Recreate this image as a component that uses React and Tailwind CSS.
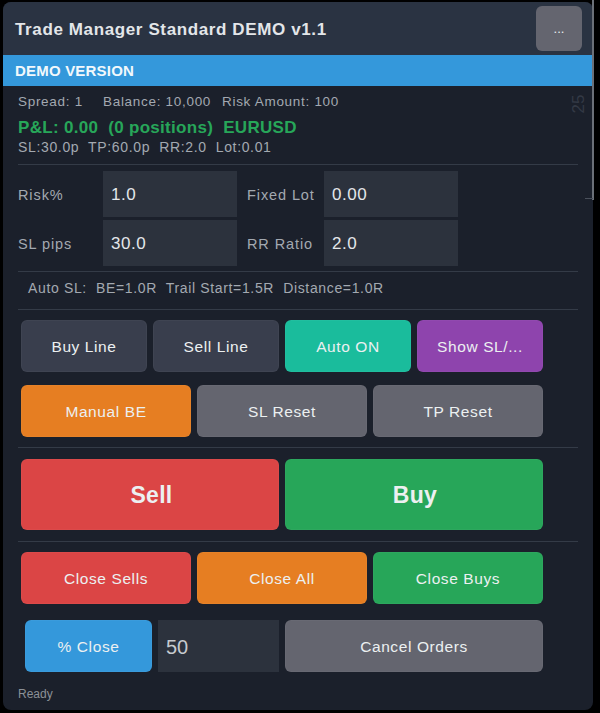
const Btn = ({ className, children }) => {
  return (
    <button className={"flex items-center justify-center rounded-[6px] border border-white/[0.03] pt-[2px] text-[15.5px] tracking-[0.6px] text-[#ecf0f1] " + className}>
      {children}
    </button>
  )
}

const Divider = () => <div className="h-px bg-[#343b47]" />

const Field = ({ label, value, labelW }) => {
  return (
    <div className="flex items-center">
      <span className={"pt-[3px] text-[14.5px] tracking-[0.9px] text-[#a3a9b1] " + labelW}>{label}</span>
      <div className="flex h-[46px] w-[134px] items-center bg-[#2c323d] pl-[8px] pt-[1px] text-[17px] tracking-[0.5px] text-[#e4e7ea]">{value}</div>
    </div>
  )
}

const App = () => {
  return (
    <div className="h-[713px] w-[600px] bg-black pl-[3px] pr-[7px] pt-[2px] font-['Liberation_Sans',Arial,sans-serif]">
      <div className="relative h-[708px] rounded-[8px] bg-[#1b202b]">
        {/* title bar */}
        <div className="flex h-[53px] items-center justify-between rounded-t-[8px] bg-[#2a3342] pl-[12px] pr-[11px]">
          <span className="pt-[3px] text-[17px] font-bold tracking-[0.62px] text-[#e3e6e9]">Trade Manager Standard DEMO v1.1</span>
          <div className="flex h-[45px] w-[46px] items-center justify-center rounded-[6px] bg-[#64656f] text-[13px] text-[#ecf0f1]">...</div>
        </div>
        <div className="flex h-[31px] items-center bg-[#3498db] pl-[12px] pt-[1px] text-[15px] font-bold tracking-[0.2px] text-[#f2f8fc]">DEMO VERSION</div>

        <div className="px-[15px]">
          <div className="mt-[7px] flex h-[18px] items-center text-[13.5px] tracking-[0.7px] text-[#a3a9b1]">
            <span className="w-[85px]">Spread: 1</span>
            <span className="w-[119px]">Balance: 10,000</span>
            <span>Risk Amount: 100</span>
          </div>
          <div className="mt-[6px] flex h-[22px] items-center text-[17px] font-bold tracking-[0.3px] text-[#27a659]">
            <span className="whitespace-pre">P&amp;L: 0.00  (0 positions)  EURUSD</span>
          </div>
          <div className="-mt-[1px] h-[18px] whitespace-pre text-[14px] leading-[18px] tracking-[0.65px] text-[#a3a9b1]">SL:30.0p  TP:60.0p  RR:2.0  Lot:0.01</div>
          <div className="mt-[8px]"><Divider /></div>

          <div className="mt-[6px] flex flex-col gap-[3px]">
            <div className="flex gap-[10px]">
              <Field label="Risk%" value="1.0" labelW="w-[85px]" />
              <Field label="Fixed Lot" value="0.00" labelW="w-[77px]" />
            </div>
            <div className="flex gap-[10px]">
              <Field label="SL pips" value="30.0" labelW="w-[85px]" />
              <Field label="RR Ratio" value="2.0" labelW="w-[77px]" />
            </div>
          </div>
          <div className="mt-[5px]"><Divider /></div>
          <div className="flex h-[37px] items-center whitespace-pre pb-[4px] pl-[10px] text-[14px] tracking-[0.65px] text-[#a3a9b1]">Auto SL:  BE=1.0R  Trail Start=1.5R  Distance=1.0R</div>
          <Divider />
        </div>

        <div className="w-[540px] pl-[18px]">
          <div className="mt-[10px] grid h-[52px] grid-cols-4 gap-[6px]">
            <Btn className="bg-[#393e4d]">Buy Line</Btn>
            <Btn className="bg-[#393e4d]">Sell Line</Btn>
            <Btn className="bg-[#1abc9c]">Auto ON</Btn>
            <Btn className="bg-[#8e44ad]">Show SL/...</Btn>
          </div>
          <div className="mt-[13px] grid h-[52px] grid-cols-3 gap-[6px]">
            <Btn className="bg-[#e67e22]">Manual BE</Btn>
            <Btn className="bg-[#64656f]">SL Reset</Btn>
            <Btn className="bg-[#64656f]">TP Reset</Btn>
          </div>
        </div>
        <div className="mt-[10px] px-[15px]"><Divider /></div>
        <div className="w-[540px] pl-[18px]">
          <div className="mt-[11px] grid h-[71px] grid-cols-2 gap-[6px]">
            <Btn className="bg-[#db4545] pl-[3px] !text-[23px] font-bold !tracking-[0.3px]">Sell</Btn>
            <Btn className="bg-[#27a659] pl-[2px] !text-[23px] font-bold !tracking-[0.3px]">Buy</Btn>
          </div>
        </div>
        <div className="mt-[11px] px-[15px]"><Divider /></div>
        <div className="w-[540px] pl-[18px]">
          <div className="mt-[10px] grid h-[52px] grid-cols-3 gap-[6px]">
            <Btn className="bg-[#db4545]">Close Sells</Btn>
            <Btn className="bg-[#e67e22]">Close All</Btn>
            <Btn className="bg-[#27a659]">Close Buys</Btn>
          </div>
          <div className="mt-[16px] flex h-[52px] gap-[6px] pl-[4px]">
            <Btn className="w-[127px] bg-[#3498db]">% Close</Btn>
            <div className="flex w-[121px] items-center bg-[#2c323d] pl-[8px] pt-[2px] text-[20px] text-[#c6cacf]">50</div>
            <Btn className="w-[258px] bg-[#64656f]">Cancel Orders</Btn>
          </div>
        </div>
        <div className="mt-[13px] pl-[15px] text-[12px] text-[#8b9097]">Ready</div>

        <div className="absolute left-[567px] top-[93px] -rotate-90 text-[17px] leading-[18px] text-[#333945]">25</div>
        {/* scrollbar sliver on the right edge */}
        <div className="absolute right-[-1px] top-[-2px] h-[200px] w-[2px] bg-[#6b7078]" />
        <div className="absolute right-0 top-[196px] h-px w-[8px] bg-[#4a505b]" />
      </div>
    </div>
  )
}

export default App
